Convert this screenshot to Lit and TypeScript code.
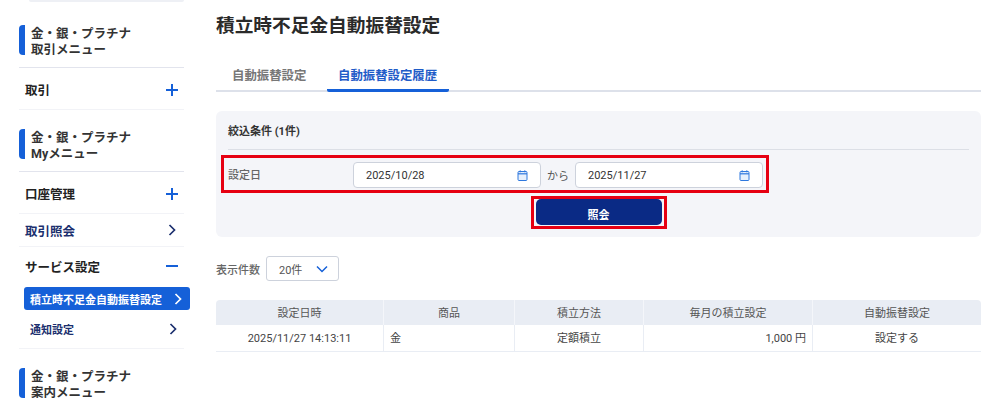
import { LitElement, html, css } from "lit";
import { customElement } from "lit/decorators.js";

const plus = html`<svg class="ic" width="14" height="14" viewBox="0 0 14 14"><path d="M7 1v12M1 7h12" stroke="#1560d8" stroke-width="2" fill="none"/></svg>`;
const minus = html`<svg class="ic" width="14" height="14" viewBox="0 0 14 14"><path d="M1 7h12" stroke="#1560d8" stroke-width="2" fill="none"/></svg>`;
const chev = (c: string) => html`<svg class="chev" width="8" height="12" viewBox="0 0 8 12"><path d="M1.5 1l5 5-5 5" stroke="${c}" stroke-width="1.7" fill="none"/></svg>`;
const cal = html`<svg class="cal" width="11" height="11" viewBox="0 0 11 11"><rect x="1" y="1.5" width="9" height="9" rx="1" fill="#e6f0fd" stroke="#2f78de" stroke-width="1"/><path d="M1 3.8h9" stroke="#2f78de" stroke-width="1.2"/><path d="M3.2 .3v2M7.8 .3v2" stroke="#2f78de" stroke-width="1"/></svg>`;

@customElement("app-root")
export class AppRoot extends LitElement {
  static styles = css`
    :host { display: block; width: 1000px; height: 409px; overflow: hidden; background: #fff; color: #333;
      font-family: Roboto, "Noto Sans CJK JP", sans-serif; }
    .page { display: flex; align-items: flex-start; padding-left: 19px; }
    .side { width: 165px; flex: none; margin-right: 32px; }
    .stub { height: 2px; margin-left: 10px; background: #eef0f5; border-radius: 0 0 4px 4px; margin-bottom: 23px; }
    .head { border-left: 6px solid #1560d8; border-radius: 4px 0 0 4px; height: 29px; padding: 1px 0 0 6px; font-size: 12.5px; font-weight: 700; line-height: 15.5px; color: #333; }
    .hr { height: 1px; background: #e2e4ed; margin: 12px 0 1px; }
    .gap { height: 19px; }
    .item { display: flex; align-items: center; justify-content: space-between; font-size: 12.5px; font-weight: 700; padding: 0 5px 0 6px; color: #222; border-bottom: 1px solid #f2f3f7; box-sizing: border-box; }
    .item.link { color: #1b2f6e; padding-right: 5px; }
    .item.h41 { height: 41px; padding-top: 1px; }
    .item.h33 { height: 33px; }
    .item.open { height: 40px; border: none; padding-bottom: 2px; }
    .chev { margin-right: 3px; }
    .sub { height: 23px; margin: 0 -6px 0 5px; padding: 0 5px 0 6px; background: #1560d8; border-radius: 3px; color: #fff; font-size: 11px; font-weight: 700; display: flex; align-items: center; justify-content: space-between; }
    .item.sub2 { height: 39px; font-size: 11px; padding: 0 4px 0 11px; }
    .main { width: 765px; flex: none; }
    h1 { margin: 0; font-size: 18.7px; line-height: 26px; font-weight: 700; padding-top: 13px; color: #2a2a2a; height: 26px; }
    .tabs { display: flex; margin-top: 21px; height: 32px; border-bottom: 2px solid #dde1ea; box-sizing: border-box; }
    .tab { font-size: 12.4px; font-weight: 700; color: #777; width: 111px; padding-left: 16px; line-height: 31px; height: 32px; box-sizing: border-box; }
    .tab.on { color: #1f5cc8; border-bottom: 3px solid #1560d8; width: 122px; border-radius: 2px; padding-left: 11px; }
    .panel { position: relative; margin-top: 19px; height: 126px; background: #f4f5f9; border-radius: 6px; box-sizing: border-box; padding: 0 12px; }
    .ptitle { font-size: 11px; font-weight: 700; line-height: 41px; height: 38px; border-bottom: 1px solid #dcdfe6; color: #333; }
    .row { display: flex; align-items: center; margin-top: 12px; font-size: 11px; }
    .lbl { width: 125px; color: #666; font-weight: 500; font-size: 11px; line-height: 28px; height: 26px; }
    .input { width: 188px; height: 26px; box-sizing: border-box; background: #fff; border: 1px solid #cdd2dc; border-radius: 4px; display: flex; align-items: center; justify-content: space-between; padding: 0 12px 0 12px; color: #333; font-size: 11px; }
    .kara { width: 34px; text-align: center; color: #555; font-size: 11px; }
    .btnrow { display: flex; justify-content: center; margin-top: 11px; }
    .btn { width: 126px; height: 26px; box-sizing: border-box; padding-top: 3px; background: #0a2a85; border-radius: 5px; color: #fff; font-size: 11px; font-weight: 700; display: flex; align-items: center; justify-content: center; }
    .red { position: absolute; border: 3px solid #e60012; box-sizing: border-box; pointer-events: none; }
    .r1 { left: 5px; top: 44px; width: 548px; height: 38px; }
    .r2 { left: 315px; top: 85px; width: 136px; height: 33px; }
    .count { display: flex; align-items: center; margin-top: 19px; font-size: 11px; color: #666; font-weight: 500; }
    .sel { margin-left: 6px; width: 73px; height: 25px; box-sizing: border-box; border: 1px solid #cdd2dc; border-radius: 3px; display: flex; align-items: center; justify-content: space-between; padding: 0 10px 0 12px; font-size: 11px; color: #555; font-weight: 400; }
    .table { display: grid; grid-template-columns: 168px 131px 129px 169px 168px; margin-top: 19px; font-size: 11px; color: #444; }
    .th { height: 25px; background: #e9edf4; text-align: center; line-height: 27px; border-right: 1px solid #f4f6fa; color: #555; }
    .th.first { border-top-left-radius: 4px; }
    .th.last { border-top-right-radius: 4px; border-right: none; }
    .td { height: 27px; line-height: 28px; box-sizing: border-box; border-bottom: 1px solid #e9edf4; border-right: 1px solid #e9edf4; padding: 0 6px; text-align: center; }
    .td.l { text-align: left; }
    .td.r { text-align: right; }
    .td.last { border-right: none; }
  `;

  render() {
    return html`<div class="page">
      <aside class="side">
        <div class="stub"></div>
        <div class="head">金・銀・プラチナ<br />取引メニュー</div>
        <div class="hr"></div>
        <div class="item h41">取引${plus}</div>
        <div class="gap"></div>
        <div class="head">金・銀・プラチナ<br />Myメニュー</div>
        <div class="hr"></div>
        <div class="item h41">口座管理${plus}</div>
        <div class="item link h33">取引照会${chev("#1b2f6e")}</div>
        <div class="item open">サービス設定${minus}</div>
        <div class="sub">積立時不足金自動振替設定${chev("#fff")}</div>
        <div class="item link sub2">通知設定${chev("#1b2f6e")}</div>
        <div class="gap"></div>
        <div class="head">金・銀・プラチナ<br />案内メニュー</div>
      </aside>
      <main class="main">
        <h1>積立時不足金自動振替設定</h1>
        <div class="tabs"><div class="tab">自動振替設定</div><div class="tab on">自動振替設定履歴</div></div>
        <section class="panel">
          <div class="ptitle">絞込条件 (1件)</div>
          <div class="row">
            <div class="lbl">設定日</div>
            <div class="input">2025/10/28${cal}</div>
            <div class="kara">から</div>
            <div class="input">2025/11/27${cal}</div>
          </div>
          <div class="btnrow"><div class="btn">照会</div></div>
          <div class="red r1"></div>
          <div class="red r2"></div>
        </section>
        <div class="count">表示件数
          <div class="sel">20件<svg width="12" height="8" viewBox="0 0 12 8"><path d="M1 1.5l5 5 5-5" stroke="#1560d8" stroke-width="1.5" fill="none"/></svg></div>
        </div>
        <div class="table">
          <div class="th first">設定日時</div><div class="th">商品</div><div class="th">積立方法</div><div class="th">毎月の積立設定</div><div class="th last">自動振替設定</div>
          <div class="td">2025/11/27 14:13:11</div><div class="td l">金</div><div class="td">定額積立</div><div class="td r">1,000 円</div><div class="td last">設定する</div>
        </div>
      </main>
    </div>`;
  }
}
